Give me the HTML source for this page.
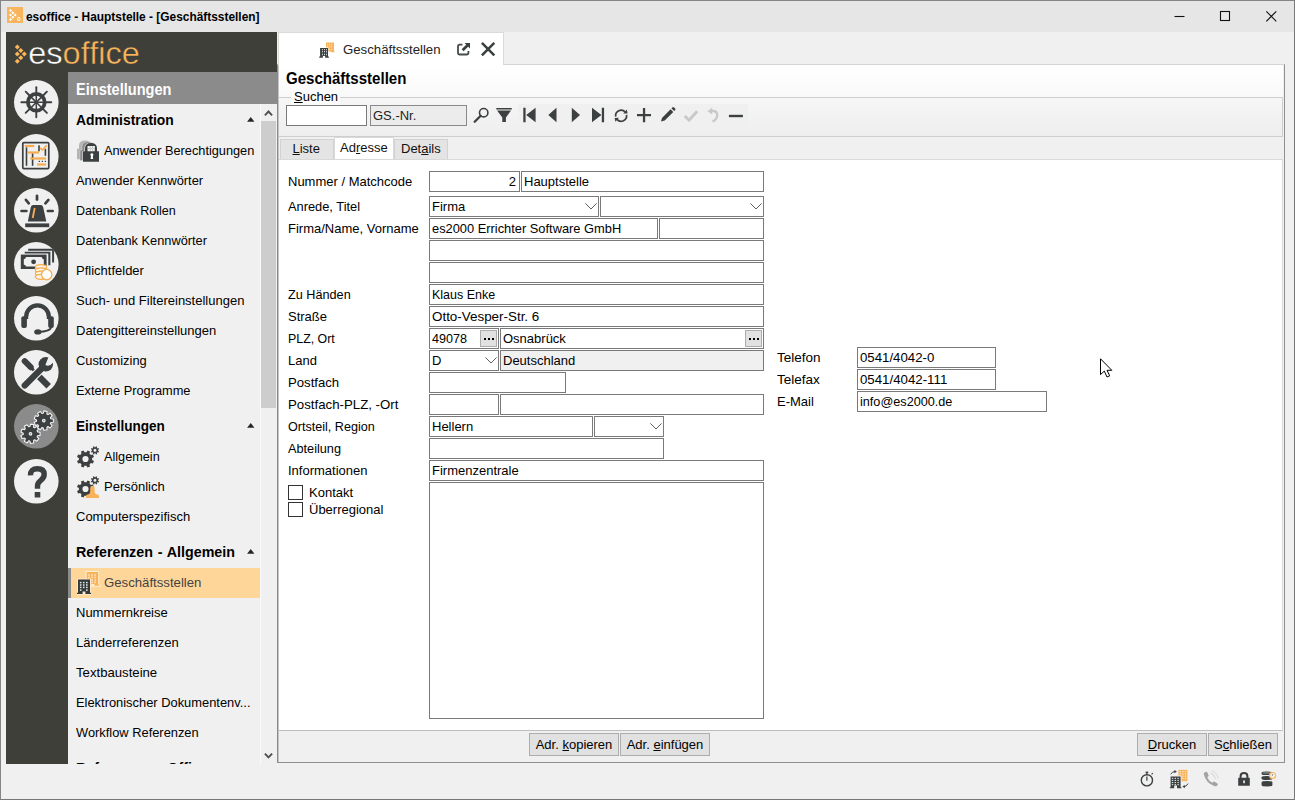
<!DOCTYPE html>
<html lang="de">
<head>
<meta charset="utf-8">
<title>esoffice - Hauptstelle - [Geschäftsstellen]</title>
<style>
*{box-sizing:border-box;margin:0;padding:0}
html,body{width:1295px;height:800px;overflow:hidden;background:#f0f0f0}
body{font-family:"Liberation Sans",sans-serif;font-size:13px;color:#000;position:relative}
.abs{position:absolute}
svg{display:block;position:absolute;overflow:visible}
#win{position:absolute;left:0;top:0;width:1295px;height:800px;border:1px solid #858585;border-right-color:#777;border-bottom-color:#777;background:#f0f0f0}
#titlebar{position:absolute;left:1px;top:1px;width:1293px;height:31px;background:#e6e6e6}
#title{position:absolute;left:25.9px;top:10px;font-weight:bold;font-size:12px;line-height:15px;white-space:nowrap}
#dark{position:absolute;left:6px;top:32px;width:62px;height:732px;background:#3f3f3a}
#logo{position:absolute;left:6px;top:32px;width:271px;height:40px;background:#3f3f3a}
#navhead{position:absolute;left:68px;top:72px;width:209px;height:32px;background:#8b8b8b;color:#fff;font-weight:bold;font-size:16px;line-height:32px;padding-left:8px;padding-top:2px}
#nav{position:absolute;left:68px;top:104px;width:192px;height:660px;background:#f0f0f0;overflow:hidden}
.ni{position:absolute;left:8px;height:30px;line-height:30px;white-space:nowrap;font-size:13px;color:#000}
.nh{position:absolute;left:8px;height:30px;line-height:30px;white-space:nowrap;font-size:15px;font-weight:bold}
.tri{position:absolute;left:178.8px;width:0;height:0;border-left:3.7px solid transparent;border-right:3.7px solid transparent;border-bottom:4.4px solid #222;margin-top:-.4px}
#sb{position:absolute;left:260px;top:104px;width:17px;height:660px;background:#f0f0f0;border-left:1px solid #fafafa}
#thumb{position:absolute;left:261px;top:121px;width:15px;height:287px;background:#cdcdcd}
.circ{position:absolute;left:14px;width:44px;height:44px;border-radius:22px;background:#f0f0f0}
#main{position:absolute;left:277px;top:64px;width:1008px;height:699px;border:1px solid #909090;border-left-color:#8a8a8a;border-top-color:#d4d4d4;background:#f0f0f0}
#mainl{position:absolute;left:278px;top:65px;width:1px;height:697px;background:#c4c4c4}
#mtab{position:absolute;left:278px;top:32px;width:226px;height:34px;background:#fff;border:1px solid #dadada;border-bottom:none}
#hdr{position:absolute;left:279px;top:65px;width:1004px;height:72px;background:linear-gradient(#fff 0%,#f9f9f9 44%,#f6f6f6 46%,#eeeeee 100%)}
#h1{position:absolute;left:286px;top:69px;font-size:16px;font-weight:bold;line-height:19px;white-space:nowrap}
#content{position:absolute;left:279px;top:159px;width:1004px;height:572px;background:#fff;border-top:1px solid #d9d9d9;border-bottom:1px solid #bdbdbd;border-right:1px solid #dcdcdc}
.lb{position:absolute;left:288px;height:21px;line-height:21px;white-space:nowrap}
.fx{position:absolute;height:21px;border:1px solid #7a7a7a;background:#fff;line-height:19px;padding-left:2px;white-space:nowrap;overflow:hidden}
.btn{position:absolute;height:23px;border:1px solid #adadad;background:#e1e1e1;line-height:21px;text-align:center;white-space:nowrap}
.bx{display:inline-block;transform:scaleX(.91);transform-origin:0 50%}
.chev{position:absolute;width:12px;height:7px}
.dots{position:absolute;width:17px;height:17px;border:1px solid #adadad;background:#e1e1e1}
.dots i{position:absolute;top:7px;width:2px;height:2px;background:#000}
.cb{position:absolute;left:288px;width:15px;height:15px;border:1px solid #333;background:#fff}
</style>
</head>
<body>
<div id="win"></div>
<div id="titlebar"></div><svg style="left:7px;top:7px" width="16" height="16" viewBox="0 0 16 16"><rect width="16" height="16" fill="#f8b55e"/><path fill="#fff" d="M3.5 1.95L5.05 3.5L3.5 5.05L1.95 3.5Z"/><path fill="#fff" d="M3.5 6.45L5.05 8L3.5 9.55L1.95 8Z"/><path fill="#fff" d="M3.5 10.95L5.05 12.5L3.5 14.05L1.95 12.5Z"/><path fill="#fff" d="M5.85 4.2L7.3999999999999995 5.75L5.85 7.3L4.3 5.75Z"/><path fill="#fff" d="M5.85 8.7L7.3999999999999995 10.25L5.85 11.8L4.3 10.25Z"/><path fill="#fff" d="M8.1 6.45L9.65 8L8.1 9.55L6.55 8Z"/><rect x="10.6" y="10.6" width="2.3" height="2.7" rx=".6" fill="none" stroke="#fff" stroke-width="1"/></svg><div id="title"><span class="bx" style="transform:scaleX(.992)">esoffice - Hauptstelle - [Geschäftsstellen]</span></div><svg style="left:1160px;top:1px" width="134" height="31" viewBox="0 0 134 31"><g stroke="#111" stroke-width="1.1" fill="none"><path d="M14.5 15.5H24.5"/><rect x="60.5" y="10.5" width="9" height="9"/><path d="M106.3 10.3L116.3 20.3M116.3 10.3L106.3 20.3"/></g></svg>
<div id="dark"></div>
<div id="logo"></div><svg style="left:6px;top:32px" width="271" height="40" viewBox="0 0 271 40"><path fill="#fbb55a" d="M11.3 12.5L13.8 15L11.3 17.5L8.8 15Z"/><path fill="#fbb55a" d="M11.3 19.6L13.8 22.1L11.3 24.6L8.8 22.1Z"/><path fill="#fbb55a" d="M11.3 26.7L13.8 29.2L11.3 31.7L8.8 29.2Z"/><path fill="#fbb55a" d="M14.8 16.05L17.3 18.55L14.8 21.05L12.3 18.55Z"/><path fill="#fbb55a" d="M14.8 23.15L17.3 25.65L14.8 28.15L12.3 25.65Z"/><path fill="#fbb55a" d="M18.3 19.6L20.8 22.1L18.3 24.6L15.8 22.1Z"/><text x="22.2" y="31.6" font-family="Liberation Sans" font-size="31.8" textLength="111.6" lengthAdjust="spacingAndGlyphs" stroke="#3f3f3a" stroke-width=".45"><tspan fill="#ffffff">es</tspan><tspan fill="#fbb55a">office</tspan></text></svg>
<svg style="left:13.8px;top:79.8px" width="44.6" height="44.6" viewBox="0 0 44.6 44.6"><clipPath id="cc0"><circle cx="22.3" cy="22.3" r="22.3"/></clipPath><circle cx="22.3" cy="22.3" r="22.3" fill="#f0f0f0"/><g clip-path="url(#cc0)"><circle cx="22.3" cy="22.3" r="8.4" fill="none" stroke="#3c4040" stroke-width="3.8"/><circle cx="22.3" cy="22.3" r="2.3" fill="#3c4040"/><line x1="24.30" y1="22.30" x2="30.30" y2="22.30" stroke="#3c4040" stroke-width="1.5"/><line x1="32.30" y1="22.30" x2="37.30" y2="22.30" stroke="#3c4040" stroke-width="1.9" stroke-linecap="round"/><line x1="23.71" y1="23.71" x2="27.96" y2="27.96" stroke="#3c4040" stroke-width="1.5"/><line x1="29.37" y1="29.37" x2="32.91" y2="32.91" stroke="#3c4040" stroke-width="1.9" stroke-linecap="round"/><line x1="22.30" y1="24.30" x2="22.30" y2="30.30" stroke="#3c4040" stroke-width="1.5"/><line x1="22.30" y1="32.30" x2="22.30" y2="37.30" stroke="#3c4040" stroke-width="1.9" stroke-linecap="round"/><line x1="20.89" y1="23.71" x2="16.64" y2="27.96" stroke="#3c4040" stroke-width="1.5"/><line x1="15.23" y1="29.37" x2="11.69" y2="32.91" stroke="#3c4040" stroke-width="1.9" stroke-linecap="round"/><line x1="20.30" y1="22.30" x2="14.30" y2="22.30" stroke="#3c4040" stroke-width="1.5"/><line x1="12.30" y1="22.30" x2="7.30" y2="22.30" stroke="#3c4040" stroke-width="1.9" stroke-linecap="round"/><line x1="20.89" y1="20.89" x2="16.64" y2="16.64" stroke="#3c4040" stroke-width="1.5"/><line x1="15.23" y1="15.23" x2="11.69" y2="11.69" stroke="#3c4040" stroke-width="1.9" stroke-linecap="round"/><line x1="22.30" y1="20.30" x2="22.30" y2="14.30" stroke="#3c4040" stroke-width="1.5"/><line x1="22.30" y1="12.30" x2="22.30" y2="7.30" stroke="#3c4040" stroke-width="1.9" stroke-linecap="round"/><line x1="23.71" y1="20.89" x2="27.96" y2="16.64" stroke="#3c4040" stroke-width="1.5"/><line x1="29.37" y1="15.23" x2="32.91" y2="11.69" stroke="#3c4040" stroke-width="1.9" stroke-linecap="round"/></g></svg>
<svg style="left:13.8px;top:133.9px" width="44.6" height="44.6" viewBox="0 0 44.6 44.6"><clipPath id="cc1"><circle cx="22.3" cy="22.3" r="22.3"/></clipPath><circle cx="22.3" cy="22.3" r="22.3" fill="#f0f0f0"/><g clip-path="url(#cc1)"><rect x="8.80" y="8.60" width="26" height="26" rx="1" fill="none" stroke="#3c4040" stroke-width="1.7"/><rect x="11.70" y="13.30" width="1.60" height="18.50" fill="#3c4040"/><rect x="17.80" y="19.30" width="1.60" height="12.50" fill="#3c4040"/><rect x="24.20" y="11.30" width="1.60" height="6.00" fill="#3c4040"/><rect x="30.60" y="14.80" width="1.60" height="7.00" fill="#3c4040"/><rect x="24.70" y="26.80" width="1.30" height="1.20" fill="#3c4040"/><rect x="27.70" y="26.80" width="1.30" height="1.20" fill="#3c4040"/><rect x="30.70" y="26.80" width="1.30" height="1.20" fill="#3c4040"/><rect x="10.80" y="10.90" width="9.50" height="2.20" fill="#f6ad4f"/><rect x="13.20" y="17.40" width="11.80" height="2.20" fill="#f6ad4f"/><rect x="16.20" y="23.40" width="15.90" height="2.20" fill="#f6ad4f"/><rect x="23.00" y="29.40" width="9.10" height="2.20" fill="#f6ad4f"/><path d="M26.20 14.00 L28.50 16.00 L32.60 11.40" fill="none" stroke="#f6ad4f" stroke-width="1.7"/></g></svg>
<svg style="left:13.8px;top:188.0px" width="44.6" height="44.6" viewBox="0 0 44.6 44.6"><clipPath id="cc2"><circle cx="22.3" cy="22.3" r="22.3"/></clipPath><circle cx="22.3" cy="22.3" r="22.3" fill="#f0f0f0"/><g clip-path="url(#cc2)"><path fill="#3c4040" d="M13.80 33.40 L16.80 19.20 Q17.20 17.00 19.40 17.00 H26.60 Q28.80 17.00 29.20 19.20 L32.30 33.40Z"/><rect x="11.20" y="35.40" width="24" height="3.8" fill="#3c4040"/><line x1="20.70" y1="20.00" x2="18.70" y2="30.00" stroke="#f6ad4f" stroke-width="1.8"/><line x1="23.00" y1="7.80" x2="23.00" y2="11.60" stroke="#3c4040" stroke-width="2.7" stroke-linecap="round"/><line x1="11.90" y1="11.90" x2="14.80" y2="15.30" stroke="#3c4040" stroke-width="2.7" stroke-linecap="round"/><line x1="31.40" y1="15.30" x2="34.40" y2="11.90" stroke="#3c4040" stroke-width="2.7" stroke-linecap="round"/><line x1="7.50" y1="23.00" x2="12.40" y2="23.00" stroke="#3c4040" stroke-width="2.7" stroke-linecap="round"/><line x1="33.90" y1="23.00" x2="38.70" y2="23.00" stroke="#3c4040" stroke-width="2.7" stroke-linecap="round"/></g></svg>
<svg style="left:13.8px;top:242.1px" width="44.6" height="44.6" viewBox="0 0 44.6 44.6"><clipPath id="cc3"><circle cx="22.3" cy="22.3" r="22.3"/></clipPath><circle cx="22.3" cy="22.3" r="22.3" fill="#f0f0f0"/><g clip-path="url(#cc3)"><path fill="#3c4040" d="M14.20 6.80H40.10V20.40H38.10V8.70H14.20Z"/><path fill="#3c4040" d="M10.70 9.70H36.40V23.30H34.30V11.60H10.70Z"/><rect x="6.80" y="12.60" width="25.8" height="14.4" fill="#3c4040"/><path fill="#f0f0f0" d="M12.00 15.10H27.60Q27.80 17.10 29.80 17.30V22.40Q27.80 22.60 27.60 24.60H12.00Q11.80 22.60 9.80 22.40V17.30Q11.80 17.10 12.00 15.10Z"/><circle cx="19.60" cy="19.80" r="2.4" fill="#3c4040"/><rect x="20.80" y="23.80" width="12.6" height="14" rx="3" fill="#f0f0f0"/><ellipse cx="27.00" cy="25.20" rx="5.6" ry="2.5" fill="#fdf3e4" stroke="#f6ad4f" stroke-width="1.2"/><ellipse cx="27.00" cy="28.40" rx="5.6" ry="2.5" fill="#fdf3e4" stroke="#f6ad4f" stroke-width="1.2"/><ellipse cx="27.00" cy="31.60" rx="5.6" ry="2.5" fill="#fdf3e4" stroke="#f6ad4f" stroke-width="1.2"/><ellipse cx="27.00" cy="34.80" rx="5.6" ry="2.5" fill="#fdf3e4" stroke="#f6ad4f" stroke-width="1.2"/><circle cx="32.70" cy="32.60" r="5.2" fill="#fff" stroke="#f6ad4f" stroke-width="1.3"/></g></svg>
<svg style="left:13.8px;top:296.2px" width="44.6" height="44.6" viewBox="0 0 44.6 44.6"><clipPath id="cc4"><circle cx="22.3" cy="22.3" r="22.3"/></clipPath><circle cx="22.3" cy="22.3" r="22.3" fill="#f0f0f0"/><g clip-path="url(#cc4)"><path fill="none" stroke="#3c4040" stroke-width="4.2" d="M12.10 23.00 V21.00 A11.4 11.6 0 0 1 34.90 21.00 V23.00"/><rect x="7.30" y="20.20" width="5.6" height="11.8" rx="2" fill="#3c4040"/><rect x="34.20" y="20.20" width="5.6" height="11.8" rx="2" fill="#3c4040"/><path fill="none" stroke="#3c4040" stroke-width="2" d="M37.40 31.00 Q36.20 35.50 24.20 36.00"/><ellipse cx="23.80" cy="35.90" rx="3.6" ry="2.6" fill="#3c4040"/></g></svg>
<svg style="left:13.8px;top:350.3px" width="44.6" height="44.6" viewBox="0 0 44.6 44.6"><clipPath id="cc5"><circle cx="22.3" cy="22.3" r="22.3"/></clipPath><circle cx="22.3" cy="22.3" r="22.3" fill="#f0f0f0"/><g clip-path="url(#cc5)"><line x1="10.70" y1="11.20" x2="16.70" y2="17.20" stroke="#3c4040" stroke-width="6" stroke-linecap="round"/><line x1="15.20" y1="15.70" x2="24.20" y2="24.70" stroke="#3c4040" stroke-width="2.8"/><line x1="23.70" y1="25.20" x2="34.70" y2="36.20" stroke="#3c4040" stroke-width="6.4"/><line x1="10.70" y1="35.50" x2="28.70" y2="17.50" stroke="#f0f0f0" stroke-width="8.6"/><line x1="10.70" y1="35.50" x2="28.70" y2="17.50" stroke="#3c4040" stroke-width="6.2" stroke-linecap="round"/><circle cx="31.80" cy="14.30" r="7.2" fill="#3c4040"/><path fill="#f0f0f0" d="M31.40 15.10 L34.40 7.30 L41.20 5.70 L41.20 14.20 L39.40 12.30 Q35.70 17.20 31.40 15.10Z"/></g></svg>
<svg style="left:13.8px;top:404.4px" width="44.6" height="44.6" viewBox="0 0 44.6 44.6"><clipPath id="cc6"><circle cx="22.3" cy="22.3" r="22.3"/></clipPath><circle cx="22.3" cy="22.3" r="22.3" fill="#8b8b8b"/><g clip-path="url(#cc6)"><path stroke="#f2f2f2" stroke-width="1.1" stroke-linejoin="round" fill="#3c4040" fill-rule="evenodd" d="M23.55 27.91 L26.06 28.18 L26.06 31.42 L23.55 31.69 L23.12 32.89 L24.87 34.71 L22.79 37.19 L20.69 35.78 L19.59 36.42 L19.75 38.94 L16.57 39.50 L15.86 37.07 L14.61 36.85 L13.12 38.89 L10.32 37.27 L11.34 34.96 L10.52 33.99 L8.07 34.59 L6.96 31.55 L9.23 30.44 L9.23 29.16 L6.96 28.05 L8.07 25.01 L10.52 25.61 L11.34 24.64 L10.32 22.33 L13.12 20.71 L14.61 22.75 L15.86 22.53 L16.57 20.10 L19.75 20.66 L19.59 23.18 L20.69 23.82 L22.79 22.41 L24.87 24.89 L23.12 26.71Z M17.80 29.80 A1.3 1.3 0 1 0 15.20 29.80 A1.3 1.3 0 1 0 17.80 29.80Z"/><path stroke="#f2f2f2" stroke-width="1.1" stroke-linejoin="round" fill="#3c4040" fill-rule="evenodd" d="M36.85 14.71 L39.36 14.98 L39.36 18.22 L36.85 18.49 L36.42 19.69 L38.17 21.51 L36.09 23.99 L33.99 22.58 L32.89 23.22 L33.05 25.74 L29.87 26.30 L29.16 23.87 L27.91 23.65 L26.42 25.69 L23.62 24.07 L24.64 21.76 L23.82 20.79 L21.37 21.39 L20.26 18.35 L22.53 17.24 L22.53 15.96 L20.26 14.85 L21.37 11.81 L23.82 12.41 L24.64 11.44 L23.62 9.13 L26.42 7.51 L27.91 9.55 L29.16 9.33 L29.87 6.90 L33.05 7.46 L32.89 9.98 L33.99 10.62 L36.09 9.21 L38.17 11.69 L36.42 13.51Z M31.10 16.60 A1.3 1.3 0 1 0 28.50 16.60 A1.3 1.3 0 1 0 31.10 16.60Z"/></g></svg>
<svg style="left:13.8px;top:458.5px" width="44.6" height="44.6" viewBox="0 0 44.6 44.6"><clipPath id="cc7"><circle cx="22.3" cy="22.3" r="22.3"/></clipPath><circle cx="22.3" cy="22.3" r="22.3" fill="#f0f0f0"/><g clip-path="url(#cc7)"><path fill="none" stroke="#3c4040" stroke-width="5.4" d="M16.5 16.4Q16.3 9.7 23.4 9.7Q30.2 9.7 30.2 15.3Q30.2 18.8 26.8 21.4Q23.5 23.8 23.5 27V29.8"/><rect x="20.7" y="33" width="5.6" height="5.5" fill="#3c4040"/></g></svg>
<div id="navhead"><span class="bx">Einstellungen</span></div>
<div id="nav">
<div class="nh" style="top:1px"><span class="bx" style="transform:scaleX(0.924)">Administration</span></div><svg style="left:178.7px;top:13.3px" width="8" height="5" viewBox="0 0 8 5"><path d="M.1 4.7L3.75 .1L7.4 4.7Z" fill="#262626"/></svg>
<div class="abs" style="left:8px;top:34px;width:24px;height:24px"><svg width="24" height="24" viewBox="0 0 24 24"><path transform="translate(-6 -2.6)" fill="#b4b4b4" d="M7 13.3H9V10.5Q9 5 15 5Q21 5 21 10.5V13.3H23V23.8H7Z"/><path transform="translate(-3 -1.3)" fill="#8a8a8a" stroke="#e4e4e4" stroke-width=".4" d="M7 13.3H9V10.5Q9 5 15 5Q21 5 21 10.5V13.3H23V23.8H7Z"/><path fill="#f0f0f0" d="M6.5 24.2V12.9H8.4V10.5Q8.4 4.4 15 4.4Q21.6 4.4 21.6 10.5V12.9H23.5V24.2Z"/><path fill="#3c4040" d="M7 13.3H23V23.8H7Z M9 13.5V10.5Q9 5 15 5Q21 5 21 10.5V13.5H18.6V8H11.6V13.5Z"/><rect x="11.8" y="8" width="6.8" height="4.7" fill="#f4f4f4"/><path fill="#3c4040" opacity=".35" d="M13.8 8V12.7H14.6V8Z M16 8V12.7H16.8V8Z M11.8 10H18.6V10.7H11.8Z"/><path fill="#fff" d="M15.8 15.3a1.5 1.5 0 0 1 1 2.7L17.2 21H14.6L15 18a1.5 1.5 0 0 1 .8 -2.7Z"/></svg></div><div class="ni" style="top:32px;left:36px"><span class="bx" style="transform:scaleX(0.981)">Anwender Berechtigungen</span></div>
<div class="ni" style="top:62px"><span class="bx" style="transform:scaleX(0.988)">Anwender Kennwörter</span></div>
<div class="ni" style="top:92px"><span class="bx" style="transform:scaleX(0.966)">Datenbank Rollen</span></div>
<div class="ni" style="top:122px"><span class="bx" style="transform:scaleX(0.985)">Datenbank Kennwörter</span></div>
<div class="ni" style="top:152px">Pflichtfelder</div>
<div class="ni" style="top:182px">Such- und Filtereinstellungen</div>
<div class="ni" style="top:212px">Datengittereinstellungen</div>
<div class="ni" style="top:242px"><span class="bx" style="transform:scaleX(0.988)">Customizing</span></div>
<div class="ni" style="top:272px"><span class="bx" style="transform:scaleX(0.984)">Externe Programme</span></div>
<div class="nh" style="top:307px"><span class="bx" style="transform:scaleX(0.903)">Einstellungen</span></div><svg style="left:178.7px;top:319.3px" width="8" height="5" viewBox="0 0 8 5"><path d="M.1 4.7L3.75 .1L7.4 4.7Z" fill="#262626"/></svg>
<div class="abs" style="left:8px;top:340px;width:24px;height:24px"><svg width="24" height="24" viewBox="0 0 24 24"><path fill="#3c4040" fill-rule="evenodd" d="M16.13 15.98 L17.96 17.03 L16.92 19.55 L14.88 18.99 L13.49 20.38 L14.05 22.42 L11.53 23.46 L10.48 21.63 L8.52 21.63 L7.47 23.46 L4.95 22.42 L5.51 20.38 L4.12 18.99 L2.08 19.55 L1.04 17.03 L2.87 15.98 L2.87 14.02 L1.04 12.97 L2.08 10.45 L4.12 11.01 L5.51 9.62 L4.95 7.58 L7.47 6.54 L8.52 8.37 L10.48 8.37 L11.53 6.54 L14.05 7.58 L13.49 9.62 L14.88 11.01 L16.92 10.45 L17.96 12.97 L16.13 14.02Z M12.60 15.00 A3.1 3.1 0 1 0 6.40 15.00 A3.1 3.1 0 1 0 12.60 15.00Z"/><path fill="#3c4040" fill-rule="evenodd" d="M22.07 6.75 L23.08 7.28 L22.58 8.49 L21.49 8.15 L20.85 8.79 L21.19 9.88 L19.98 10.38 L19.45 9.37 L18.55 9.37 L18.02 10.38 L16.81 9.88 L17.15 8.79 L16.51 8.15 L15.42 8.49 L14.92 7.28 L15.93 6.75 L15.93 5.85 L14.92 5.32 L15.42 4.11 L16.51 4.45 L17.15 3.81 L16.81 2.72 L18.02 2.22 L18.55 3.23 L19.45 3.23 L19.98 2.22 L21.19 2.72 L20.85 3.81 L21.49 4.45 L22.58 4.11 L23.08 5.32 L22.07 5.85Z M20.50 6.30 A1.5 1.5 0 1 0 17.50 6.30 A1.5 1.5 0 1 0 20.50 6.30Z"/></svg></div><div class="ni" style="top:338px;left:36px"><span class="bx" style="transform:scaleX(0.976)">Allgemein</span></div>
<div class="abs" style="left:8px;top:370px;width:24px;height:24px"><svg width="24" height="24" viewBox="0 0 24 24"><path fill="#3c4040" fill-rule="evenodd" d="M16.13 15.98 L17.96 17.03 L16.92 19.55 L14.88 18.99 L13.49 20.38 L14.05 22.42 L11.53 23.46 L10.48 21.63 L8.52 21.63 L7.47 23.46 L4.95 22.42 L5.51 20.38 L4.12 18.99 L2.08 19.55 L1.04 17.03 L2.87 15.98 L2.87 14.02 L1.04 12.97 L2.08 10.45 L4.12 11.01 L5.51 9.62 L4.95 7.58 L7.47 6.54 L8.52 8.37 L10.48 8.37 L11.53 6.54 L14.05 7.58 L13.49 9.62 L14.88 11.01 L16.92 10.45 L17.96 12.97 L16.13 14.02Z M12.60 15.00 A3.1 3.1 0 1 0 6.40 15.00 A3.1 3.1 0 1 0 12.60 15.00Z"/><path fill="#3c4040" fill-rule="evenodd" d="M22.07 6.75 L23.08 7.28 L22.58 8.49 L21.49 8.15 L20.85 8.79 L21.19 9.88 L19.98 10.38 L19.45 9.37 L18.55 9.37 L18.02 10.38 L16.81 9.88 L17.15 8.79 L16.51 8.15 L15.42 8.49 L14.92 7.28 L15.93 6.75 L15.93 5.85 L14.92 5.32 L15.42 4.11 L16.51 4.45 L17.15 3.81 L16.81 2.72 L18.02 2.22 L18.55 3.23 L19.45 3.23 L19.98 2.22 L21.19 2.72 L20.85 3.81 L21.49 4.45 L22.58 4.11 L23.08 5.32 L22.07 5.85Z M20.50 6.30 A1.5 1.5 0 1 0 17.50 6.30 A1.5 1.5 0 1 0 20.50 6.30Z"/><path fill="#f8b35a" d="M14.2 14.2 a2.2 2.4 0 0 1 4.4 0 V17.5 Q18.6 20 21.5 20.6 Q23 21 23 22.2 V24 H10 V22.2 Q10 21 11.5 20.6 Q14.2 20 14.2 17.5Z"/></svg></div><div class="ni" style="top:368px;left:36px">Persönlich</div>
<div class="ni" style="top:398px">Computerspezifisch</div>
<div class="nh" style="top:433px"><span class="bx" style="word-spacing:.9px;transform:scaleX(0.951)">Referenzen - Allgemein</span></div><svg style="left:178.7px;top:445.3px" width="8" height="5" viewBox="0 0 8 5"><path d="M.1 4.7L3.75 .1L7.4 4.7Z" fill="#262626"/></svg>
<div class="abs" style="left:0;top:464px;width:192px;height:30px;background:#ffd699"></div><div class="abs" style="left:0;top:464px;width:3px;height:30px;background:#8b8b8b"></div><div class="abs" style="left:8px;top:466px;width:24px;height:24px"><svg width="24" height="24" viewBox="0 0 24 24"><path fill="#fff0d6" d="M9.6 1H23.2V14.2H24.4V16.8H9.6Z"/><path fill="#f8b35a" d="M10.6 2H22.2V14.6H23.4V15.8H18.4V14H15.4V15.8H10.6Z"/><rect x="12.20" y="4.25" width="1.6" height="1.5" fill="#fde6c4"/><rect x="15.30" y="4.25" width="1.6" height="1.5" fill="#fde6c4"/><rect x="18.40" y="4.25" width="1.6" height="1.5" fill="#fde6c4"/><rect x="12.20" y="6.65" width="1.6" height="1.5" fill="#fde6c4"/><rect x="15.30" y="6.65" width="1.6" height="1.5" fill="#fde6c4"/><rect x="18.40" y="6.65" width="1.6" height="1.5" fill="#fde6c4"/><rect x="12.20" y="9.25" width="1.6" height="1.5" fill="#fde6c4"/><rect x="15.30" y="9.25" width="1.6" height="1.5" fill="#fde6c4"/><rect x="18.40" y="9.25" width="1.6" height="1.5" fill="#fde6c4"/><rect x="12.20" y="11.65" width="1.6" height="1.5" fill="#fde6c4"/><rect x="15.30" y="11.65" width="1.6" height="1.5" fill="#fde6c4"/><rect x="18.40" y="11.65" width="1.6" height="1.5" fill="#fde6c4"/><path fill="#ffe9c6" d="M1 8.6H15V25H1Z"/><path fill="#33393a" d="M2 9.6H14V22.8H15V24H9.4V21.4H6.6V24H1V22.8H2Z"/><rect x="3.90" y="11.85" width="1.6" height="1.5" fill="#e6e6e6"/><rect x="6.95" y="11.85" width="1.6" height="1.5" fill="#e6e6e6"/><rect x="10.00" y="11.85" width="1.6" height="1.5" fill="#e6e6e6"/><rect x="3.90" y="14.25" width="1.6" height="1.5" fill="#e6e6e6"/><rect x="6.95" y="14.25" width="1.6" height="1.5" fill="#e6e6e6"/><rect x="10.00" y="14.25" width="1.6" height="1.5" fill="#e6e6e6"/><rect x="3.90" y="16.65" width="1.6" height="1.5" fill="#e6e6e6"/><rect x="6.95" y="16.65" width="1.6" height="1.5" fill="#e6e6e6"/><rect x="10.00" y="16.65" width="1.6" height="1.5" fill="#e6e6e6"/><rect x="3.90" y="19.35" width="1.6" height="1.5" fill="#e6e6e6"/><rect x="10.00" y="19.35" width="1.6" height="1.5" fill="#e6e6e6"/></svg></div><div class="ni" style="top:464px;left:36px;color:#444"><span class="bx" style="transform:scaleX(1.014)">Geschäftsstellen</span></div>
<div class="ni" style="top:494px">Nummernkreise</div>
<div class="ni" style="top:524px">Länderreferenzen</div>
<div class="ni" style="top:554px"><span class="bx" style="transform:scaleX(1.012)">Textbausteine</span></div>
<div class="ni" style="top:584px"><span class="bx" style="transform:scaleX(0.991)">Elektronischer Dokumentenv...</span></div>
<div class="ni" style="top:614px"><span class="bx" style="transform:scaleX(0.989)">Workflow Referenzen</span></div>
<div class="nh" style="top:649px"><span class="bx" style="word-spacing:.9px;transform:scaleX(0.951)">Referenzen - Office</span></div><svg style="left:178.7px;top:661.3px" width="8" height="5" viewBox="0 0 8 5"><path d="M.1 4.7L3.75 .1L7.4 4.7Z" fill="#262626"/></svg>
</div>
<div id="sb"></div><div id="thumb"></div>
<svg style="left:260px;top:104px" width="17" height="660" viewBox="0 0 17 660"><path d="M4.9 11.3L8.5 7.5L12.1 11.3 M4.9 649.6L8.5 653.4L12.1 649.6" fill="none" stroke="#505050" stroke-width="1.9"/></svg>
<div id="main"></div><div id="mainl"></div>
<div id="mtab"></div><svg style="left:319px;top:42px" width="17" height="17" viewBox="0 0 17 17"><path fill="#f8b55e" d="M7 .4H15V9.2H15.6V10.2H12V9.6H7Z"/><rect x="8.1" y="2.1" width="1" height="1" fill="#fde4c0"/><rect x="10.1" y="2.1" width="1" height="1" fill="#fde4c0"/><rect x="12.1" y="2.1" width="1" height="1" fill="#fde4c0"/><rect x="8.1" y="4.1" width="1" height="1" fill="#fde4c0"/><rect x="10.1" y="4.1" width="1" height="1" fill="#fde4c0"/><rect x="12.1" y="4.1" width="1" height="1" fill="#fde4c0"/><rect x="8.1" y="7.1" width="1" height="1" fill="#fde4c0"/><rect x="10.1" y="7.1" width="1" height="1" fill="#fde4c0"/><rect x="12.1" y="7.1" width="1" height="1" fill="#fde4c0"/><rect x="8.1" y="5.6" width="1" height=".8" fill="#fbcb8c"/><rect x="10.1" y="5.6" width="1" height=".8" fill="#fbcb8c"/><rect x="12.1" y="5.6" width="1" height=".8" fill="#fbcb8c"/><rect x=".6" y="5.4" width="8.8" height="10.2" fill="#fff"/><path fill="#3a4040" d="M1.1 5.9H9V14.5H9.9V15.7H6.2V13.9H3.9V15.7H.2V14.5H1.1Z"/><rect x="3" y="7.2" width="1" height="1" fill="#eeeeee"/><rect x="5" y="7.2" width="1" height="1" fill="#eeeeee"/><rect x="7" y="7.2" width="1" height="1" fill="#eeeeee"/><rect x="3" y="9.2" width="1" height="1" fill="#eeeeee"/><rect x="5" y="9.2" width="1" height="1" fill="#eeeeee"/><rect x="7" y="9.2" width="1" height="1" fill="#eeeeee"/><rect x="3" y="12.2" width="1" height="1" fill="#eeeeee"/><rect x="5" y="12.2" width="1" height="1" fill="#eeeeee"/><rect x="7" y="12.2" width="1" height="1" fill="#eeeeee"/><rect x="3" y="10.7" width="1" height=".8" fill="#8a8e8e"/><rect x="5" y="10.7" width="1" height=".8" fill="#8a8e8e"/><rect x="7" y="10.7" width="1" height=".8" fill="#8a8e8e"/></svg><div class="abs" style="left:343px;top:41px;line-height:17px;font-size:13px;color:#222;white-space:nowrap"><span class="bx" style="transform:scaleX(1.015)">Geschäftsstellen</span></div><svg style="left:456px;top:42px" width="15" height="15" viewBox="0 0 15 15"><g fill="none" stroke="#454b4b" stroke-width="1.8"><path d="M12.4 8.9V10.7Q12.4 12.5 10.6 12.5H3.8Q2 12.5 2 10.7V4.5Q2 2.7 3.8 2.7H6.4"/><path d="M6.6 8.2L11.6 3.2" stroke="#3a4040" stroke-width="2.7"/></g><path fill="#3a4040" d="M8.6 1H14V6.4Z"/></svg><svg style="left:481px;top:42px" width="15" height="15" viewBox="0 0 15 15"><path d="M.9 .9L13.3 13.3M13.3 .9L.9 13.3" stroke="#3a4040" stroke-width="2.5" fill="none"/></svg>
<div id="hdr"></div>
<div id="h1"><span class="bx" style="transform:scaleX(.94)">Geschäftsstellen</span></div>
<div class="abs" style="left:279px;top:97px;width:1004px;height:1px;background:#cecece"></div><div class="abs" style="left:279px;top:136px;width:1004px;height:1px;background:#cecece"></div><div class="abs" style="left:1282px;top:97px;width:1px;height:40px;background:#cecece"></div><div class="abs" style="left:291px;top:89px;width:49px;height:16px;background:#fbfbfb;line-height:16px;padding-left:3px;white-space:nowrap"><u>S</u>uchen</div><div class="abs" style="left:518px;top:104px;width:230px;height:23px;background:#f0f0f0"></div><div class="fx" style="left:286px;top:105px;width:81px"></div><div class="fx" style="left:370px;top:105px;width:97px;background:#ececec;border-color:#8a8a8a;color:#222">GS.-Nr.</div><svg style="left:470px;top:104px" width="280" height="24" viewBox="470 104 280 24"><circle cx="483.7" cy="112.7" r="4.2" fill="none" stroke="#3c4040" stroke-width="1.6"/><path d="M480.7 115.8L474.7 121.8" stroke="#3c4040" stroke-width="2.3" stroke-linecap="round"/><path fill="#3c4040" d="M496.3 108H511.8V109.5H496.3Z M497 110.5H511.1L505.9 117.4V121.9H502.3V117.4Z"/><path fill="#3c4040" d="M523.3 107.8H525.6V122.2H523.3Z M535.6 107.8V122.2L526.2 115Z"/><path fill="#3c4040" d="M556.5 107.8V122.2L548.3 115Z"/><path fill="#3c4040" d="M571.8 107.8V122.2L580 115Z"/><path fill="#3c4040" d="M592 107.8V122.2L601.4 115Z M601.8 107.8H604.1V122.2H601.8Z"/><g fill="none" stroke="#3c4040" stroke-width="1.7"><path d="M615.7 116.6A5.5 5.5 0 0 1 625.2 112"/><path d="M626.5 114.8A5.5 5.5 0 0 1 617 119.4"/></g><path fill="#3c4040" d="M623.2 113.6L627.6 113.4L626.8 109.6Z M619 117.8L614.6 118L615.4 121.8Z"/><path fill="#3c4040" d="M637 114H651V116.3H637Z M642.9 107.9H645.2V122.2H642.9Z"/><path fill="#3c4040" d="M661 121.6L662 117.9L670.6 109.3L673.3 112L664.7 120.6Z M671.5 108.4L672.6 107.3Q673.3 106.8 674 107.4L675.2 108.6Q675.8 109.3 675.2 110L674.1 111.1Z"/><path fill="none" stroke="#c9c9c9" stroke-width="3" d="M684.8 116L689 120.2L697.2 111.2"/><path fill="none" stroke="#c9c9c9" stroke-width="2.4" d="M711 111H713Q717.2 111 717.2 115.2Q717.2 119 712.6 121.6"/><path fill="#c9c9c9" d="M707.4 111.2L712.2 107.4V114.6Z"/><path fill="#3c4040" d="M728.9 114.8H742.9V117.2H728.9Z"/></svg>
<div class="abs" style="left:280px;top:139px;width:54px;height:21px;background:#e4e4e4;border:1px solid #d2d2d2;border-bottom:none"></div><div class="abs" style="left:394px;top:139px;width:54px;height:21px;background:#e4e4e4;border:1px solid #d2d2d2;border-bottom:none"></div><div class="abs" style="left:334px;top:137px;width:60px;height:24px;background:#fff;border:1px solid #d9d9d9;border-bottom:none"></div><div class="abs" style="left:292.5px;top:140px;line-height:17px;white-space:nowrap;color:#111"><u>L</u>iste</div><div class="abs" style="left:340px;top:139px;line-height:17px;white-space:nowrap;color:#111">Ad<u>r</u>esse</div><div class="abs" style="left:401px;top:140px;line-height:17px;white-space:nowrap;color:#111">Det<u>a</u>ils</div>
<div id="content"></div><div class="lb" style="left:288px;top:171px">Nummer / Matchcode</div><div class="fx" style="left:429px;top:171px;width:91px;text-align:right;padding-right:3px">2</div><div class="fx" style="left:521px;top:171px;width:243px;">Hauptstelle</div><div class="lb" style="left:288px;top:196px"><span class="bx" style="transform:scaleX(0.987)">Anrede, Titel</span></div><div class="fx" style="left:429px;top:196px;width:170px;">Firma</div><svg style="left:585px;top:203.0px" width="12" height="7" viewBox="0 0 12 7"><path d="M.4 .4L6 6L11.6 .4" fill="none" stroke="#606060" stroke-width="1"/></svg><div class="fx" style="left:600px;top:196px;width:164px;"></div><svg style="left:750px;top:203.0px" width="12" height="7" viewBox="0 0 12 7"><path d="M.4 .4L6 6L11.6 .4" fill="none" stroke="#606060" stroke-width="1"/></svg><div class="lb" style="left:288px;top:218px">Firma/Name, Vorname</div><div class="fx" style="left:429px;top:218px;width:229px;"><span class="bx" style="transform:scaleX(.988)">es2000 Errichter Software GmbH</span></div><div class="fx" style="left:659px;top:218px;width:105px;"></div><div class="fx" style="left:429px;top:240px;width:335px;"></div><div class="fx" style="left:429px;top:262px;width:335px;"></div><div class="lb" style="left:288px;top:284px"><span class="bx" style="transform:scaleX(0.975)">Zu Händen</span></div><div class="fx" style="left:429px;top:284px;width:335px;"><span class="bx" style="transform:scaleX(0.962)">Klaus Enke</span></div><div class="lb" style="left:288px;top:306px">Straße</div><div class="fx" style="left:429px;top:306px;width:335px;"><span class="bx" style="transform:scaleX(1.031)">Otto-Vesper-Str. 6</span></div><div class="lb" style="left:288px;top:328px"><span class="bx" style="transform:scaleX(0.952)">PLZ, Ort</span></div><div class="fx" style="left:429px;top:328px;width:70px;"><span class="bx" style="transform:scaleX(0.969)">49078</span></div><div class="dots" style="left:480px;top:330px"><i style="left:3px"></i><i style="left:7px"></i><i style="left:11px"></i></div><div class="fx" style="left:500px;top:328px;width:264px;">Osnabrück</div><div class="dots" style="left:745px;top:330px"><i style="left:3px"></i><i style="left:7px"></i><i style="left:11px"></i></div><div class="lb" style="left:288px;top:350px">Land</div><div class="fx" style="left:429px;top:350px;width:70px;">D</div><svg style="left:485px;top:357.0px" width="12" height="7" viewBox="0 0 12 7"><path d="M.4 .4L6 6L11.6 .4" fill="none" stroke="#606060" stroke-width="1"/></svg><div class="fx" style="left:500px;top:350px;width:264px;background:#f0f0f0;color:#000">Deutschland</div><div class="lb" style="left:288px;top:372px"><span class="bx" style="transform:scaleX(1.012)">Postfach</span></div><div class="fx" style="left:429px;top:372px;width:137px;"></div><div class="lb" style="left:288px;top:394px"><span class="bx" style="transform:scaleX(1.019)">Postfach-PLZ, -Ort</span></div><div class="fx" style="left:429px;top:394px;width:70px;"></div><div class="fx" style="left:500px;top:394px;width:264px;"></div><div class="lb" style="left:288px;top:416px"><span class="bx" style="transform:scaleX(0.968)">Ortsteil, Region</span></div><div class="fx" style="left:429px;top:416px;width:164px;">Hellern</div><div class="fx" style="left:594px;top:416px;width:70px;"></div><svg style="left:650px;top:423.0px" width="12" height="7" viewBox="0 0 12 7"><path d="M.4 .4L6 6L11.6 .4" fill="none" stroke="#606060" stroke-width="1"/></svg><div class="lb" style="left:288px;top:438px"><span class="bx" style="transform:scaleX(0.978)">Abteilung</span></div><div class="fx" style="left:429px;top:438px;width:235px;"></div><div class="lb" style="left:288px;top:460px">Informationen</div><div class="fx" style="left:429px;top:460px;width:335px;">Firmenzentrale</div><div class="fx" style="left:429px;top:482px;width:335px;height:237px"></div><div class="cb" style="top:485px"></div><div class="lb" style="left:309px;top:482px">Kontakt</div><div class="cb" style="top:502px"></div><div class="lb" style="left:309px;top:499px">Überregional</div><div class="lb" style="left:777px;top:347px"><span class="bx" style="transform:scaleX(1.04)">Telefon</span></div><div class="fx" style="left:857px;top:347px;width:139px;"><span class="bx" style="transform:scaleX(1.017)">0541/4042-0</span></div><div class="lb" style="left:777px;top:369px"><span class="bx" style="transform:scaleX(1.04)">Telefax</span></div><div class="fx" style="left:857px;top:369px;width:139px;"><span class="bx" style="transform:scaleX(1.02)">0541/4042-111</span></div><div class="lb" style="left:777px;top:391px">E-Mail</div><div class="fx" style="left:857px;top:391px;width:190px;"><span class="bx" style="transform:scaleX(0.974)">info@es2000.de</span></div><svg style="left:1100px;top:357.6px" width="13" height="20" viewBox="0 0 13 20"><path d="M.5 .8V16.6L4.3 13.1L7 19L9.7 17.8L7 12.3H11.8Z" fill="#fff" stroke="#000" stroke-width="1"/></svg><div class="btn" style="left:529px;top:733px;width:90px">Adr. <u>k</u>opieren</div><div class="btn" style="left:620px;top:733px;width:90px">Adr. <u>e</u>infügen</div><div class="btn" style="left:1137px;top:733px;width:70px"><u>D</u>rucken</div><div class="btn" style="left:1208px;top:733px;width:70px">S<u>c</u>hließen</div>
<svg style="left:1135px;top:766px" width="150" height="28" viewBox="1135 766 150 28"><circle cx="1146.9" cy="780.3" r="5.6" fill="none" stroke="#3c4040" stroke-width="1.4"/><path d="M1146.9 776.6V780.8" stroke="#3c4040" stroke-width="1.2"/><rect x="1145.6" y="771.6" width="2.6" height="1.6" fill="#3c4040"/><path d="M1146.9 773V774.6 M1151.6 774.4L1152.8 773.2" stroke="#3c4040" stroke-width="1.2"/><rect x="1178.4" y="769.8" width="9" height="11.4" fill="#f8b55e"/><rect x="1179.6" y="771.0" width="1.3" height="1.2" fill="#fde6c6"/><rect x="1182.2" y="771.0" width="1.3" height="1.2" fill="#fde6c6"/><rect x="1184.8" y="771.0" width="1.3" height="1.2" fill="#fde6c6"/><rect x="1179.6" y="773.3" width="1.3" height="1.2" fill="#fde6c6"/><rect x="1182.2" y="773.3" width="1.3" height="1.2" fill="#fde6c6"/><rect x="1184.8" y="773.3" width="1.3" height="1.2" fill="#fde6c6"/><rect x="1179.6" y="775.6" width="1.3" height="1.2" fill="#fde6c6"/><rect x="1182.2" y="775.6" width="1.3" height="1.2" fill="#fde6c6"/><rect x="1184.8" y="775.6" width="1.3" height="1.2" fill="#fde6c6"/><rect x="1179.6" y="777.9" width="1.3" height="1.2" fill="#fde6c6"/><rect x="1182.2" y="777.9" width="1.3" height="1.2" fill="#fde6c6"/><rect x="1184.8" y="777.9" width="1.3" height="1.2" fill="#fde6c6"/><rect x="1169.6" y="775.6" width="12" height="13" fill="#f0f0f0"/><path fill="#3c4040" d="M1170.6 776.6H1180.6V787.2H1181.4V788.2H1177V785.6H1174.2V788.2H1169.8V787.2H1170.6Z"/><rect x="1171.8" y="777.8" width="1.4" height="1.1" fill="#e0e0e0"/><rect x="1174.6" y="777.8" width="1.4" height="1.1" fill="#e0e0e0"/><rect x="1177.4" y="777.8" width="1.4" height="1.1" fill="#e0e0e0"/><rect x="1171.8" y="779.9" width="1.4" height="1.1" fill="#e0e0e0"/><rect x="1174.6" y="779.9" width="1.4" height="1.1" fill="#e0e0e0"/><rect x="1177.4" y="779.9" width="1.4" height="1.1" fill="#e0e0e0"/><rect x="1171.8" y="782.0" width="1.4" height="1.1" fill="#e0e0e0"/><rect x="1174.6" y="782.0" width="1.4" height="1.1" fill="#e0e0e0"/><rect x="1177.4" y="782.0" width="1.4" height="1.1" fill="#e0e0e0"/><rect x="1171.8" y="784.1" width="1.4" height="1.1" fill="#e0e0e0"/><rect x="1174.6" y="784.1" width="1.4" height="1.1" fill="#e0e0e0"/><rect x="1177.4" y="784.1" width="1.4" height="1.1" fill="#e0e0e0"/><path d="M1170.6 774.2Q1172.4 771.6 1175 771.6" fill="none" stroke="#3c4040" stroke-width="1"/><path fill="#3c4040" d="M1174.4 770L1176.8 771.6L1174.4 773.2Z"/><path d="M1188 783.6Q1186.6 786.4 1184 786.6" fill="none" stroke="#3c4040" stroke-width="1"/><path fill="#3c4040" d="M1184.8 785L1182.4 786.6L1184.8 788.2Z"/><path fill="#a3a3a3" d="M1204.4 772.4L1206.4 771.8Q1207 771.8 1207.4 772.6L1208.6 775.2Q1208.8 775.8 1208.2 776.4L1207.2 777.2Q1208.8 781 1212.4 782.8L1213.4 781.8Q1214 781.4 1214.6 781.8L1217.4 783.4Q1218 784 1217.8 784.6L1216.8 786Q1216 786.6 1214.8 786.2Q1206 783.4 1203.8 774.2Q1203.6 772.8 1204.4 772.4Z"/><path d="M1210.6 773Q1214.4 774.4 1215.4 778.6" fill="none" stroke="#d0d0d0" stroke-width="1"/><path d="M1211.6 770.6Q1217.2 772.4 1218 778.4" fill="none" stroke="#dcdcdc" stroke-width="1"/><path fill="#3c4040" d="M1238.2 777.8H1249.8V785.8H1238.2Z M1239.6 778V776Q1239.6 772 1244 772Q1248.4 772 1248.4 776V778H1246.4V776.2Q1246.4 774 1244 774Q1241.6 774 1241.6 776.2V778Z"/><rect x="1243.3" y="780.4" width="1.5" height="2.8" fill="#fff"/><path fill="#3c4040" d="M1261.6 772.7A5.4 1.2 0 0 1 1272.4 772.7V773.9A5.4 1.2 0 0 1 1261.6 773.9Z"/><path fill="#3c4040" d="M1261.6 777.3A5.4 1.2 0 0 1 1272.4 777.3V778.8A5.4 1.2 0 0 1 1261.6 778.8Z"/><path fill="#3c4040" d="M1261.6 782.1A5.4 1.2 0 0 1 1272.4 782.1V785.2A5.4 1.2 0 0 1 1261.6 785.2Z"/><ellipse cx="1267" cy="772.9" rx="4.3" ry="0.9" fill="#7b7f7f"/><circle cx="1272.6" cy="775.5" r="3" fill="#f4f0ea" stroke="#f8b55e" stroke-width="1.1"/><path d="M1272.4 774V775.9" stroke="#777" stroke-width=".8"/></svg>
</body>
</html>
